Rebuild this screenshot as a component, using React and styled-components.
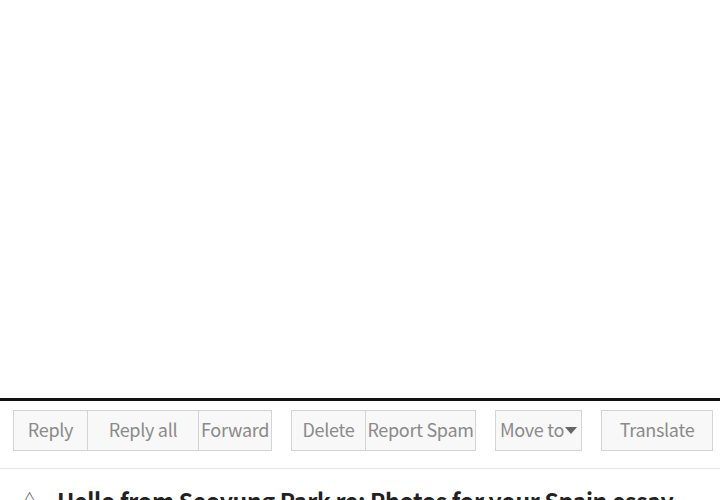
import React from "react";
import styled, { createGlobalStyle } from "styled-components";

const Global = createGlobalStyle`
  html, body {
    margin: 0;
    padding: 0;
    background: #fff;
    overflow: hidden;
  }
  body {
    font-family: "Noto Sans CJK KR", "Noto Sans", sans-serif;
  }
`;

const Page = styled.div`
  width: 720px;
  height: 500px;
  display: flex;
  flex-direction: column;
  overflow: hidden;
`;

const Blank = styled.div`
  height: 398px;
  flex-shrink: 0;
`;

const Toolbar = styled.div`
  border-top: 3px solid #111;
  display: flex;
  align-items: center;
  gap: 19px;
  padding: 9px 7px 17px 13px;
  border-bottom: 1px solid #e6e6e6;
`;

const Group = styled.div`
  display: flex;
  border: 1px solid #d4d4d4;
  background: #f8f8f8;
`;

const Btn = styled.div`
  height: 39px;
  width: ${(p) => p.w}px;
  box-sizing: border-box;
  padding-bottom: 3px;
  display: flex;
  align-items: center;
  justify-content: center;
  color: #8a8a8a;
  font-size: 18px;
  letter-spacing: -0.3px;
  & + & {
    border-left: 1px solid #d4d4d4;
  }
`;

const Caret = styled.span`
  display: inline-block;
  width: 0;
  height: 0;
  border-left: 6px solid transparent;
  border-right: 6px solid transparent;
  border-top: 7px solid #666;
  margin-left: 1px;
  margin-top: 3px;
`;

const Subject = styled.div`
  display: flex;
  align-items: flex-start;
  gap: 17px;
  padding: 16px 0 0 19px;
  white-space: nowrap;
`;

const Arrow = styled.span`
  color: #555;
  font-size: 21px;
  line-height: 30px;
`;

const Title = styled.div`
  font-size: 23px;
  font-weight: 600;
  color: #222;
  line-height: 30px;
  letter-spacing: -0.3px;
`;

export default function App() {
  return (
    <Page>
      <Global />
      <Blank />
      <Toolbar>
        <Group>
          <Btn w={73}>Reply</Btn>
          <Btn w={111}>Reply all</Btn>
          <Btn w={73}>Forward</Btn>
        </Group>
        <Group>
          <Btn w={73}>Delete</Btn>
          <Btn w={110}>Report Spam</Btn>
        </Group>
        <Group>
          <Btn w={85}>
            Move to<Caret />
          </Btn>
        </Group>
        <Group>
          <Btn w={110}>Translate</Btn>
        </Group>
      </Toolbar>
      <Subject>
        <Arrow>△</Arrow>
        <Title>Hello from Seoyung Park re: Photos for your Spain essay</Title>
      </Subject>
    </Page>
  );
}
